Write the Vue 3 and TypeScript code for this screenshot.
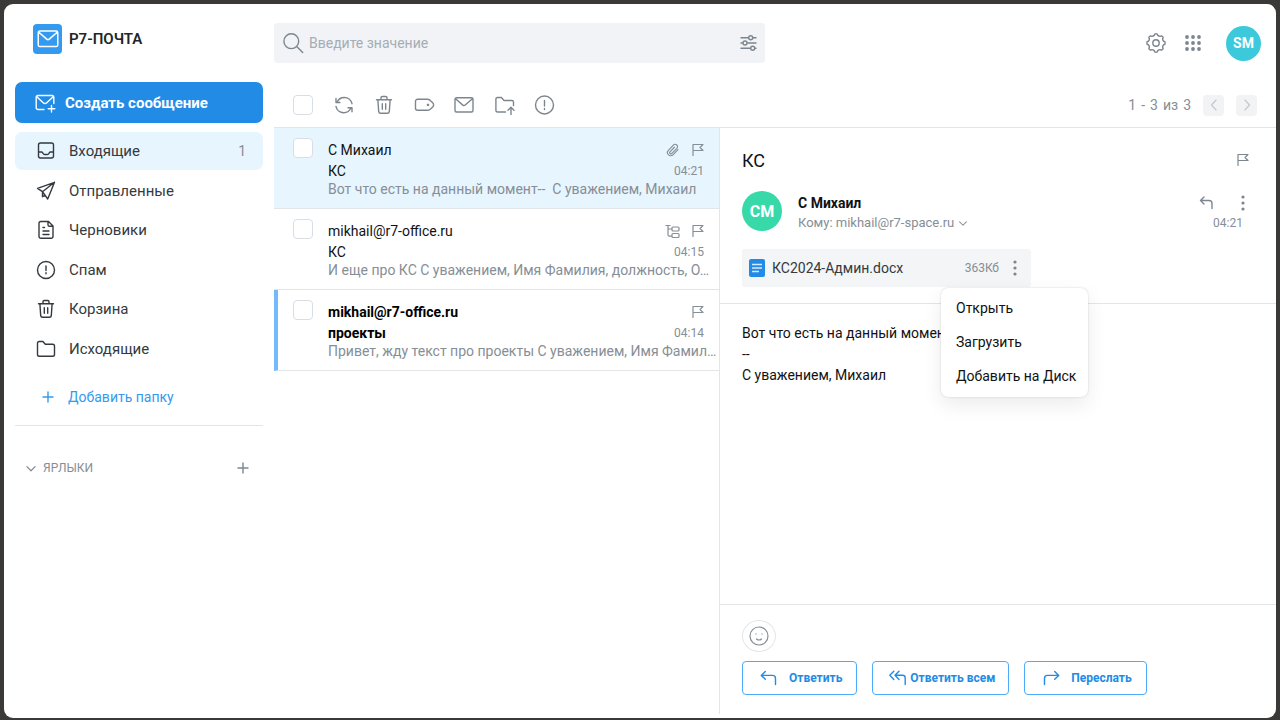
<script setup lang="ts">
import { h, ref } from 'vue'
import type { FunctionalComponent } from 'vue'

/* Cog with eight teeth joined by concave arcs */
function cogPath(): string {
  const point = (deg: number, r: number): string => {
    const a = ((deg - 90) * Math.PI) / 180
    return `${(12 + r * Math.cos(a)).toFixed(2)} ${(12 + r * Math.sin(a)).toFixed(2)}`
  }
  let d = `M${point(-8, 9)}`
  for (let k = 0; k < 8; k++) {
    const a = k * 45
    d += `A3 3 0 0 1 ${point(a + 8, 9)}L${point(a + 13, 7.8)}A4 4 0 0 0 ${point(a + 32, 7.8)}L${point(a + 37, 9)}`
  }
  return d + 'Z'
}

const icons: Record<string, string> = {
  inbox: 'M6.5 4h11a2 2 0 0 1 2 2v11a2 2 0 0 1-2 2h-11a2 2 0 0 1-2-2v-11a2 2 0 0 1 2-2ZM4.5 13h3c.9 0 1 .5 1.400 1.200.4.8.9 1.300 1.800 1.300h2.600c.9 0 1.400-.5 1.800-1.300.4-.7.5-1.200 1.400-1.200h3',
  send: 'M3.500 9.300L20.500 3.300L13.700 20L8.500 12.700ZM8.500 12.700L20.500 3.300M8.500 12.700v5l2.800-1.400',
  draft: 'M7 3.500h7.500l4.500 4.500v10.500a1.800 1.800 0 0 1-1.800 1.800h-10.400a1.800 1.800 0 0 1-1.800-1.800v-13.200a1.800 1.800 0 0 1 1.800-1.800ZM14 3.700v3a1.600 1.600 0 0 0 1.600 1.600h3M9 9.500h1.500M9 13h6M9 16.500h6',
  alert: 'M20.500 12a8.500 8.500 0 1 1-17 0a8.500 8.500 0 0 1 17 0ZM12 8v4.500M12 14.800v.9',
  trash: 'M4.500 6.700h15M9 6.700v-2a1.200 1.200 0 0 1 1.200-1.200h3.600a1.200 1.200 0 0 1 1.200 1.200v2M5.900 6.700l.8 12a1.800 1.800 0 0 0 1.800 1.600h7a1.800 1.800 0 0 0 1.800-1.600l.8-12M10.300 10.700v5.500M13.700 10.700v5.500',
  folder: 'M3.500 17.500v-11.200a1.800 1.800 0 0 1 1.800-1.800h3.600l2.400 2.700h7.400a1.800 1.800 0 0 1 1.800 1.800v8.500a1.800 1.800 0 0 1-1.800 1.800h-13.400a1.800 1.800 0 0 1-1.800-1.800Z',
  plus: 'M12 7v10M7 12h10',
  compose: 'M11 18.500h-6a1.800 1.800 0 0 1-1.800-1.800v-10.400a1.800 1.800 0 0 1 1.800-1.800h14a1.800 1.800 0 0 1 1.800 1.800v6.200M3.500 5.500l6.700 6.200a2.600 2.600 0 0 0 3.600 0l6.700-6.200M18.500 14.500v6.500M15.200 17.800h6.600',
  mail: 'M4.500 4.700h15a1.500 1.500 0 0 1 1.500 1.500v11.300a1.500 1.500 0 0 1-1.500 1.500h-15a1.500 1.500 0 0 1-1.500-1.500v-11.300a1.500 1.500 0 0 1 1.500-1.500ZM3.300 5.500l7.500 6.600a1.800 1.800 0 0 0 2.400 0l7.500-6.600',
  search: 'M17.700 10.200a7.400 7.400 0 1 1-14.800 0a7.400 7.400 0 0 1 14.800 0ZM15.700 15.600l6 6',
  sliders: 'M5 6.700h7.700M16.700 6.700h3.300M5 12h2M11 12h9M5 17.300h9.700M18.700 17.300h1.300M16.700 6.700a2 2 0 1 1-4 0a2 2 0 0 1 4 0ZM11 12a2 2 0 1 1-4 0a2 2 0 0 1 4 0ZM18.700 17.300a2 2 0 1 1-4 0a2 2 0 0 1 4 0Z',
  refresh: 'M5 9.500c1.200-3 4-5 7.300-5c3.800 0 7 2.600 7.700 6.200M4 5.500v4h4M19 14.700c-1.200 3-4 5-7.300 5c-3.800 0-7-2.600-7.700-6.200M20 18.700v-4h-4',
  tag: 'M5.500 6.300h9.800c1.100 0 2.100.4 2.900 1.100l2.500 2.300c1.200 1.100 1.200 3.100 0 4.200l-2.500 2.300c-.8.700-1.800 1.100-2.900 1.100h-9.800a2 2 0 0 1-2-2v-7a2 2 0 0 1 2-2ZM16 11.300a.6.6 0 1 1 0 1.200a.6.6 0 1 1 0-1.200Z',
  move: 'M13.500 19h-7.800a1.800 1.800 0 0 1-1.800-1.800v-11.200a1.500 1.500 0 0 1 1.500-1.500h4l2.600 3h8a1.500 1.500 0 0 1 1.500 1.500v3.500M19 21.500v-7M16 17.300l3-3l3 3',
  spam: 'M21.500 12a9 9 0 1 1-18 0a9 9 0 0 1 18 0ZM12.500 7.500v5.500M12.500 15.500v1',
  cog: cogPath() + 'M15.200 12a3.200 3.200 0 1 1-6.400 0a3.200 3.200 0 0 1 6.400 0Z',
  clip: 'M20.500 11.500l-8.500 8.700a5.400 5.400 0 0 1-7.900-7.600l8.600-9a4 4 0 0 1 6 5.500l-8.600 8.800a2.100 2.100 0 0 1-3.200-2.800l7.500-7.800',
  flag: 'M7 17.500v-11h10l-3 3l3 3h-10',
  thread: 'M5 6.500h4M7 6.500v9.300a1.300 1.300 0 0 0 1.300 1.300h2.700M7 10h4M12 8h5a1 1 0 0 1 1 1v2a1 1 0 0 1-1 1h-5a1 1 0 0 1-1-1v-2a1 1 0 0 1 1-1ZM12 14.500h5a1 1 0 0 1 1 1v2a1 1 0 0 1-1 1h-5a1 1 0 0 1-1-1v-2a1 1 0 0 1 1-1Z',
  left: 'M14.500 6l-5.500 6l5.500 6',
  right: 'M9.500 6l5.500 6l-5.500 6',
  down: 'M7.500 10.500l4.500 4.500l4.500-4.500',
  back: 'M9 6l-3.500 3.500l3.500 3.500M5.500 9.500h8.500a3 3 0 0 1 3 3v5',
  reply: 'M8.300 5.500l-4 3.900l4 3.900M4.300 9.400h11.200a3 3 0 0 1 3 3v6.100',
  replyAll: 'M7.800 5.200l-4 4.100l4 4.100M13 5.200l-4 4.100l4 4.100M9 9.300h7.500a2.700 2.700 0 0 1 2.700 2.700v6.500',
  forward: 'M15.700 5.500l4 3.900l-4 3.900M19.700 9.400h-11.200a3 3 0 0 0-3 3v6.100',
  smile: 'M21 12a9 9 0 1 1-18 0a9 9 0 0 1 18 0ZM9.500 15c.7.700 1.500 1 2.500 1s1.800-.3 2.500-1M9 9.800v.3M15 9.800v.3',
}

const Icon: FunctionalComponent<{ name: string; size?: number }> = (props) =>
  h(
    'svg',
    {
      class: 'icon',
      viewBox: '0 0 24 24',
      width: props.size ?? 24,
      height: props.size ?? 24,
      'aria-hidden': 'true',
    },
    [h('path', { d: icons[props.name] })],
  )
Icon.props = ['name', 'size']

interface Folder { icon: string; label: string; count?: number }
interface Message {
  id: number
  from: string
  subject: string
  preview: string
  time: string
  badge?: string
  selected?: boolean
  unread?: boolean
}

const folders: Folder[] = [
  { icon: 'inbox', label: 'Входящие', count: 1 },
  { icon: 'send', label: 'Отправленные' },
  { icon: 'draft', label: 'Черновики' },
  { icon: 'alert', label: 'Спам' },
  { icon: 'trash', label: 'Корзина' },
  { icon: 'folder', label: 'Исходящие' },
]
const activeFolder = ref('Входящие')

const tools = [
  { icon: 'refresh', label: 'Обновить' },
  { icon: 'trash', label: 'Удалить' },
  { icon: 'tag', label: 'Ярлык' },
  { icon: 'mail', label: 'Прочитано' },
  { icon: 'move', label: 'Переместить' },
  { icon: 'spam', label: 'В спам' },
]

const messages: Message[] = [
  { id: 1, from: 'С Михаил', subject: 'КС', preview: 'Вот что есть на данный момент--\u00a0 С уважением, Михаил', time: '04:21', badge: 'clip', selected: true },
  { id: 2, from: 'mikhail@r7-office.ru', subject: 'КС', preview: 'И еще про КС С уважением, Имя Фамилия, должность, О…', time: '04:15', badge: 'thread' },
  { id: 3, from: 'mikhail@r7-office.ru', subject: 'проекты', preview: 'Привет, жду текст про проекты С уважением, Имя Фамил…', time: '04:14', unread: true },
]

const pager = ['1', '-', '3', 'из', '3']
const menu = ['Открыть', 'Загрузить', 'Добавить на Диск']
const query = ref('')
</script>

<template>
  <div class="frame">
    <div class="window">
      <aside class="sidebar">
        <div class="brand">
          <span class="brand-mark"><Icon name="mail" :size="26" /></span>
          <span class="brand-name">Р7-ПОЧТА</span>
        </div>
        <button class="compose" type="button"><Icon name="compose" />Создать сообщение</button>
        <nav class="folders">
          <a
            v-for="f in folders"
            :key="f.label"
            href="#"
            class="folder"
            :class="{ active: f.label === activeFolder }"
            @click.prevent="activeFolder = f.label"
          >
            <Icon :name="f.icon" />
            <span class="folder-label">{{ f.label }}</span>
            <span v-if="f.count" class="folder-count">{{ f.count }}</span>
          </a>
        </nav>
        <button class="add-folder" type="button"><Icon name="plus" />Добавить папку</button>
        <div class="labels">
          <button class="labels-toggle" type="button"><Icon name="down" :size="22" />ЯРЛЫКИ</button>
          <button class="plain" type="button" aria-label="Добавить ярлык"><Icon name="plus" /></button>
        </div>
      </aside>

      <main class="main">
        <header class="header">
          <label class="search">
            <Icon name="search" />
            <input v-model="query" type="text" placeholder="Введите значение" aria-label="Поиск" />
            <button class="plain" type="button" aria-label="Фильтр"><Icon name="sliders" /></button>
          </label>
          <div class="header-actions">
            <button class="plain" type="button" aria-label="Настройки"><Icon name="cog" /></button>
            <button class="plain" type="button" aria-label="Приложения">
              <svg class="dots" viewBox="0 0 24 24" width="24" height="24" aria-hidden="true">
                <template v-for="y in [6, 12, 18]" :key="y">
                  <circle v-for="x in [6, 12, 18]" :key="x" :cx="x" :cy="y" r="1.9" />
                </template>
              </svg>
            </button>
            <button class="account" type="button">SM</button>
          </div>
        </header>

        <div class="toolbar">
          <input class="check" type="checkbox" aria-label="Выбрать все" />
          <div class="tools">
            <button v-for="t in tools" :key="t.label" class="plain" type="button" :aria-label="t.label">
              <Icon :name="t.icon" />
            </button>
          </div>
          <div class="pager">
            <span v-for="(p, i) in pager" :key="i">{{ p }}</span>
          </div>
          <button class="page-button" type="button" disabled aria-label="Назад"><Icon name="left" :size="20" /></button>
          <button class="page-button" type="button" disabled aria-label="Вперёд"><Icon name="right" :size="20" /></button>
        </div>

        <div class="content">
          <section class="list">
            <article
              v-for="m in messages"
              :key="m.id"
              class="message"
              :class="{ selected: m.selected, unread: m.unread }"
            >
              <input class="check" type="checkbox" :aria-label="m.from" />
              <div class="message-text">
                <div class="line from-line">
                  <span class="from">{{ m.from }}</span>
                  <Icon v-if="m.badge" :name="m.badge" :class="m.badge" :size="m.badge === 'clip' ? 14 : 24" />
                  <Icon name="flag" />
                </div>
                <div class="line subject-line">
                  <span class="subject">{{ m.subject }}</span>
                  <time class="time">{{ m.time }}</time>
                </div>
                <p class="preview">{{ m.preview }}</p>
              </div>
            </article>
          </section>

          <section class="detail">
            <div class="detail-head">
              <div class="subject-row">
                <h1>КС</h1>
                <button class="plain thin" type="button" aria-label="Отметить"><Icon name="flag" /></button>
              </div>
              <div class="sender">
                <span class="avatar">СМ</span>
                <div class="sender-text">
                  <strong>С Михаил</strong>
                  <span class="recipient">Кому: mikhail@r7-space.ru<Icon name="down" :size="18" /></span>
                </div>
                <div class="sender-side">
                  <div class="sender-actions">
                    <button class="plain" type="button" aria-label="Ответить"><Icon name="back" /></button>
                    <button class="plain" type="button" aria-label="Ещё">
                      <svg class="dots" viewBox="0 0 8 20" width="8" height="20" aria-hidden="true">
                        <circle v-for="y in [4, 10, 16]" :key="y" cx="4" :cy="y" r="1.6" />
                      </svg>
                    </button>
                  </div>
                  <time class="time">04:21</time>
                </div>
              </div>
              <div class="attachment">
                <svg class="doc" viewBox="0 0 16 18" width="16" height="18" aria-hidden="true">
                  <rect width="16" height="18" rx="2" />
                  <path d="M3 5.500h10M3 9h10M3 12.500h7" />
                </svg>
                <span class="file-name">КС2024-Админ.docx</span>
                <span class="file-size">363Кб</span>
                <button class="plain" type="button" aria-label="Действия с файлом">
                  <svg class="dots" viewBox="0 0 8 20" width="8" height="20" aria-hidden="true">
                    <circle v-for="y in [4, 10, 16]" :key="y" cx="4" :cy="y" r="1.6" />
                  </svg>
                </button>
                <div class="menu" role="menu">
                  <button v-for="item in menu" :key="item" type="button" role="menuitem">{{ item }}</button>
                </div>
              </div>
            </div>

            <div class="body">
              <p>Вот что есть на данный момент</p>
              <p>--</p>
              <p>С уважением, Михаил</p>
            </div>

            <footer class="detail-foot">
              <button class="smile thin" type="button" aria-label="Реакция"><Icon name="smile" /></button>
              <div class="replies">
                <button class="reply" type="button"><Icon name="reply" />Ответить</button>
                <button class="reply tight" type="button"><Icon name="replyAll" />Ответить всем</button>
                <button class="reply" type="button"><Icon name="forward" />Переслать</button>
              </div>
            </footer>
          </section>
        </div>
      </main>
    </div>
  </div>
</template>

<style>
body {
  background: #3a3938;
}
</style>

<style scoped>
.frame {
  box-sizing: border-box;
  display: flex;
  min-height: 100vh;
  padding: 4px 4px 2px;
  background: #3a3938;
  font-family: Roboto, "Liberation Sans", sans-serif;
  font-size: 14px;
  color: #101214;
}
.frame * {
  box-sizing: border-box;
}
.window {
  flex: 1;
  display: flex;
  min-width: 0;
  background: #fff;
  border-radius: 9px;
}
button {
  font: inherit;
  cursor: pointer;
}
p, h1 {
  margin: 0;
}
.icon {
  flex: none;
  display: block;
  fill: none;
  stroke: currentColor;
  stroke-width: 1.4;
  stroke-linecap: round;
  stroke-linejoin: round;
}
.thin .icon {
  stroke-width: 1.2;
}
.dots {
  display: block;
  fill: currentColor;
}
.plain {
  display: flex;
  padding: 0;
  border: 0;
  background: none;
  color: #7d868f;
}

.sidebar {
  flex: 0 0 270px;
  display: flex;
  flex-direction: column;
  padding: 19px 11px 0;
}
.brand {
  display: flex;
  align-items: center;
  gap: 7px;
  height: 32px;
  padding-left: 18px;
}
.brand-mark {
  display: flex;
  align-items: center;
  justify-content: center;
  width: 29px;
  height: 30px;
  border-radius: 4px;
  background: #339af0;
  color: #fff;
}
.brand-name {
  font-size: 15px;
  font-weight: 600;
  color: #212529;
}
.compose {
  display: flex;
  align-items: center;
  gap: 8px;
  height: 41px;
  margin-top: 27px;
  padding: 0 18px;
  border: 0;
  border-radius: 7px;
  background: #228be6;
  color: #fff;
  font-size: 15px;
  font-weight: 700;
}
.folders {
  display: flex;
  flex-direction: column;
  justify-content: space-between;
  min-height: 236px;
  margin-top: 9px;
}
.folder {
  display: flex;
  align-items: center;
  gap: 11px;
  height: 38px;
  padding: 0 17px 0 19px;
  border-radius: 7px;
  color: #343a40;
  font-size: 15px;
  text-decoration: none;
}
.folder.active {
  background: #e7f5ff;
}
.folder-label {
  flex: 1;
}
.folder-count {
  color: #868e96;
  font-size: 14px;
}
.add-folder {
  display: flex;
  align-items: center;
  gap: 8px;
  height: 34px;
  margin-top: 12px;
  padding: 0 21px;
  border: 0;
  background: none;
  color: #339af0;
  font-size: 14px;
}
.labels {
  display: flex;
  align-items: center;
  justify-content: space-between;
  height: 84px;
  margin-top: 11px;
  padding: 0 8px 0 5px;
  border-top: 1px solid #e3e6e9;
}
.labels-toggle {
  display: flex;
  align-items: center;
  gap: 1px;
  padding: 0;
  border: 0;
  background: none;
  color: #868e96;
  font-size: 12px;
}

.main {
  flex: 1;
  display: flex;
  flex-direction: column;
  min-width: 0;
}
.header {
  display: flex;
  align-items: center;
  justify-content: space-between;
  padding-top: 19px;
}
.search {
  display: flex;
  align-items: center;
  flex: 0 1 491px;
  height: 40px;
  padding: 0 5px 0 7px;
  border-radius: 4px;
  background: #f1f3f6;
  color: #7d868f;
}
.search input {
  flex: 1;
  min-width: 0;
  padding: 0 4px;
  border: 0;
  outline: 0;
  background: none;
  color: #343a40;
  font: inherit;
}
.search input::placeholder {
  color: #a5adb5;
  opacity: 1;
}
.header-actions {
  display: flex;
  align-items: center;
  gap: 13px;
  padding-right: 15px;
}
.account {
  width: 35px;
  height: 35px;
  margin-left: 8px;
  padding: 0;
  border: 0;
  border-radius: 50%;
  background: #3bc9db;
  color: #fff;
  font-weight: 700;
}
.toolbar {
  display: flex;
  align-items: center;
  height: 65px;
  padding: 20px 19px 0;
  border-bottom: 1px solid #e3e6e9;
}
.tools {
  display: flex;
  gap: 16px;
  margin-left: 19px;
}
.check {
  appearance: none;
  flex: none;
  width: 20px;
  height: 20px;
  margin: 0;
  border: 1px solid #d9dee4;
  border-radius: 4px;
  background: #fff;
}
.pager {
  display: flex;
  gap: 5px;
  margin-left: auto;
  color: #868e96;
}
.page-button {
  display: flex;
  align-items: center;
  justify-content: center;
  width: 21px;
  height: 21px;
  margin-left: 12px;
  padding: 0;
  border: 0;
  border-radius: 4px;
  background: #f1f3f5;
  color: #c3c9cf;
}

.content {
  flex: 1;
  display: flex;
  min-height: 0;
}
.list {
  flex: 0 0 446px;
  min-width: 0;
  margin-bottom: 4px;
  border-right: 1px solid #e3e6e9;
}
.message {
  display: flex;
  gap: 15px;
  height: 81px;
  padding: 10px 15px 0 19px;
  border-bottom: 1px solid #e3e6e9;
}
.message.selected {
  background: #e7f5ff;
}
.message.unread {
  padding-left: 15px;
  border-left: 4px solid #74b9fa;
}
.message-text {
  flex: 1;
  min-width: 0;
}
.line {
  display: flex;
  align-items: center;
  justify-content: space-between;
}
.from-line {
  height: 23px;
  margin-right: -6px;
  color: #868e96;
}
.subject-line {
  height: 20px;
}
.from-line .icon {
  stroke-width: 1.2;
}
.from-line .thread {
  margin-right: 1px;
}
.from-line .clip {
  margin-right: 6px;
  stroke-width: 2;
}
.from {
  flex: 1;
  color: #101214;
}
.unread .from,
.unread .subject {
  color: #000;
  font-weight: 700;
}
.time {
  color: #868e96;
  font-size: 12px;
}
.preview {
  overflow: hidden;
  margin-right: -14px;
  color: #868e96;
  line-height: 16px;
  text-overflow: ellipsis;
  white-space: nowrap;
}

.detail {
  flex: 1;
  display: flex;
  flex-direction: column;
  min-width: 0;
}
.detail-head {
  padding: 17px 21px 16px 22px;
  border-bottom: 1px solid #e3e6e9;
}
.subject-row {
  display: flex;
  align-items: center;
  justify-content: space-between;
  height: 30px;
}
h1 {
  font-size: 18px;
  font-weight: 400;
}
.sender {
  display: flex;
  align-items: flex-start;
  gap: 16px;
  margin-top: 16px;
}
.avatar {
  display: flex;
  align-items: center;
  justify-content: center;
  width: 40px;
  height: 40px;
  border-radius: 50%;
  background: #38d9a9;
  color: #fff;
  font-size: 16px;
  font-weight: 700;
}
.sender-text {
  flex: 1;
  display: flex;
  flex-direction: column;
  padding-top: 2px;
  line-height: 20px;
}
.recipient {
  display: flex;
  align-items: center;
  color: #868e96;
  font-size: 13px;
}
.sender-side {
  display: flex;
  flex-direction: column;
  align-items: flex-end;
  padding: 2px 12px 0 0;
  line-height: 20px;
}
.sender-actions {
  display: flex;
  align-items: center;
  gap: 20px;
  height: 20px;
  margin-right: -4px;
}
.attachment {
  position: relative;
  display: flex;
  align-items: center;
  width: 289px;
  height: 38px;
  margin-top: 16px;
  padding: 0 12px 0 7px;
  border-radius: 3px;
  background: #f3f5f7;
}
.doc rect {
  fill: #228be6;
}
.doc path {
  fill: none;
  stroke: #d6eaff;
  stroke-width: 1.4;
}
.file-name {
  flex: 1;
  padding-left: 7px;
  color: #343a40;
}
.file-size {
  padding-right: 12px;
  color: #868e96;
  font-size: 12px;
}
.menu {
  position: absolute;
  z-index: 1;
  top: 39px;
  left: 199px;
  display: flex;
  flex-direction: column;
  padding: 3px 0 4px;
  border-radius: 7px;
  background: #fff;
  box-shadow: 0 0 2px rgba(0, 0, 0, 0.18), 0 8px 20px rgba(0, 0, 0, 0.08);
}
.menu button {
  height: 34px;
  padding: 0 12px 0 15px;
  border: 0;
  background: none;
  color: #101214;
  text-align: left;
  white-space: nowrap;
}
.body {
  flex: 1;
  padding: 19px 22px;
  line-height: 21px;
}
.detail-foot {
  padding: 15px 22px 23px;
  border-top: 1px solid #e3e6e9;
}
.smile {
  display: flex;
  align-items: center;
  justify-content: center;
  width: 34px;
  height: 32px;
  padding: 0;
  border: 1px solid #e3e6e9;
  border-radius: 50%;
  background: #fff;
  color: #868e96;
}
.replies {
  display: flex;
  gap: 15px;
  margin-top: 9px;
}
.reply {
  display: flex;
  align-items: center;
  gap: 8px;
  height: 34px;
  padding: 0 14px;
  border: 1px solid #4dabf7;
  border-radius: 4px;
  background: #fff;
  color: #228be6;
  font-size: 12px;
  font-weight: 700;
}
.reply.tight {
  gap: 0;
  padding: 0 13px;
}
</style>
